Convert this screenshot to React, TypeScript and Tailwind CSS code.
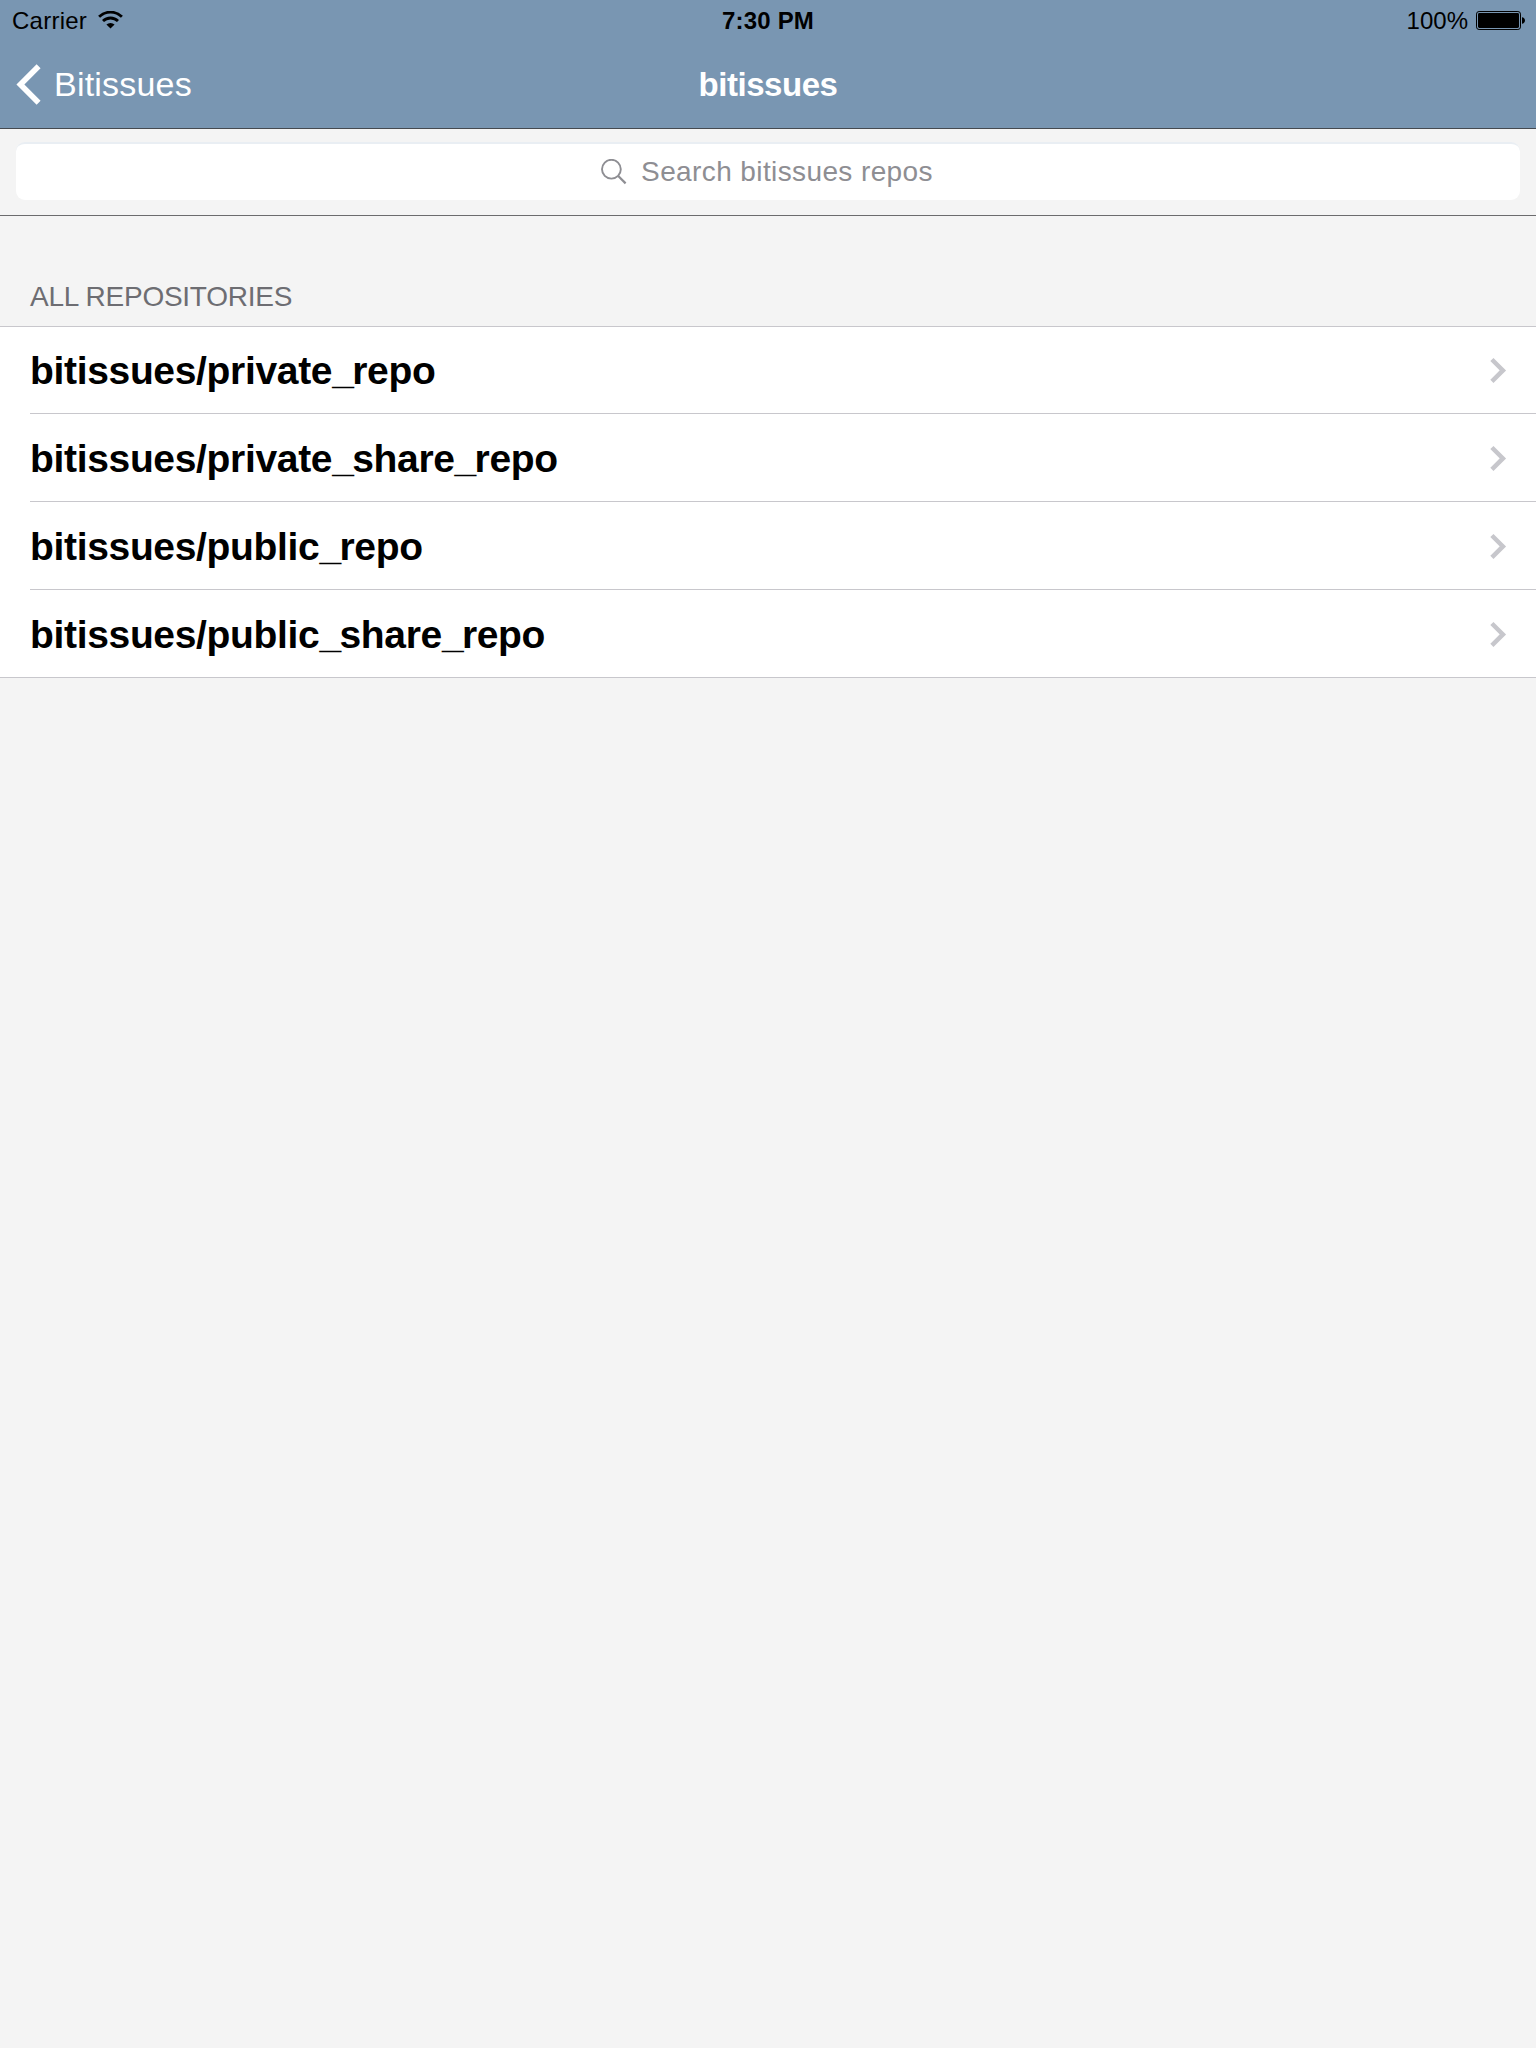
import React from "react";

const repos = [
  "bitissues/private_repo",
  "bitissues/private_share_repo",
  "bitissues/public_repo",
  "bitissues/public_share_repo",
];

function WifiIcon() {
  return (
    <svg className="ml-[11px] h-[18px] w-[25px]" viewBox="0 0 25 18" fill="none" stroke="#000">
      <path d="M1.1 5.8a16.2 16.2 0 0 1 22.8 0" strokeWidth="2.8" />
      <path d="M5 10.1a10.6 10.6 0 0 1 15 0" strokeWidth="2.8" />
      <path d="M12.5 17.6 8.4 13.5a6.1 6.1 0 0 1 8.2 0z" fill="#000" stroke="none" />
    </svg>
  );
}

function BatteryIcon() {
  return (
    <svg className="ml-[8px] h-[20px] w-[50px]" viewBox="0 0 50 20">
      <rect x="0.5" y="1.5" width="44" height="18" rx="2.6" fill="none" stroke="#000" strokeWidth="1" />
      <rect x="2" y="3" width="41" height="15" rx="1.4" fill="#000" />
      <path d="M46 7.2c1.6 0 3 1.5 3 3.3s-1.4 3.3-3 3.3z" fill="#000" />
    </svg>
  );
}

function StatusBar() {
  return (
    <div className="grid h-10 grid-cols-3 items-center text-2xl leading-[38px] text-black">
      <div className="flex items-center pl-3">
        <span className="pt-[2px] tracking-[0.25px]">Carrier</span>
        <WifiIcon />
      </div>
      <div className="pt-[2px] text-center font-bold tracking-[0.2px]">7:30 PM</div>
      <div className="flex items-center justify-end pr-[10px]">
        <span className="pt-[2px]">100%</span>
        <BatteryIcon />
      </div>
    </div>
  );
}

function NavBar() {
  return (
    <div className="grid h-[88px] grid-cols-3 items-center text-[34px] leading-[86px] text-white">
      <div className="flex items-center pl-4">
        <svg className="h-[42px] w-[26px]" viewBox="0 0 26 42" fill="none" stroke="#fff" strokeWidth="5.6">
          <path d="M22.6 3.3 4.4 21.5l18.2 18.2" />
        </svg>
        <span className="ml-[12px] tracking-[0.2px]">Bitissues</span>
      </div>
      <h1 className="pt-[2px] text-center text-[33px] font-bold tracking-[-0.45px]">bitissues</h1>
    </div>
  );
}

function SearchBar() {
  return (
    <div className="h-[87px] border-b border-[#6b6b6d] px-4 pt-[13px]">
      <div className="flex h-[58px] items-center justify-center rounded-[9px] border-t-2 border-[#e9eef3] bg-white pr-[2px] text-[28px] leading-[56px] text-[#8e8e93]">
        <svg className="h-[26px] w-[26px]" viewBox="0 0 26 26" fill="none" stroke="#8e8e93" strokeWidth="1.9">
          <circle cx="10.4" cy="10.2" r="9.4" />
          <path d="m17 16.8 7.6 7.6" strokeWidth="2.2" />
        </svg>
        <span className="ml-[14px] tracking-[0.39px]">Search bitissues repos</span>
      </div>
    </div>
  );
}

function RepoName({ name }: { name: string }) {
  return (
    <span className="pt-[2px] text-[39px] font-bold leading-[84px] tracking-[-0.33px] text-black">
      {name.split("_").map((part, i) => (
        <React.Fragment key={part}>
          {i > 0 && <span className="tracking-[-1.7px]">_</span>}
          {part}
        </React.Fragment>
      ))}
    </span>
  );
}

function RepoRow({ name, last }: { name: string; last: boolean }) {
  return (
    <li className={last ? "h-[88px] border-b border-[#c8c7cc] bg-white pl-[30px]" : "h-[88px] bg-white pl-[30px] first:h-[87px]"}>
      <div className={last ? "flex h-full items-center justify-between pr-[29px]" : "flex h-full items-center justify-between border-b border-[#c8c7cc] pr-[29px]"}>
        <RepoName name={name} />
        <svg className="h-[26px] w-[17px]" viewBox="0 0 17 26" fill="none" stroke="#c7c7cc" strokeWidth="4.5">
          <path d="M1.9 2.5 12.9 13.4 1.9 24.3" />
        </svg>
      </div>
    </li>
  );
}

export default function App() {
  return (
    <div className="flex h-[2048px] w-[1536px] flex-col bg-[#f4f4f4] font-['Liberation_Sans',Arial,sans-serif]">
      <header className="border-b border-[#454a50] bg-[#7996b2]">
        <StatusBar />
        <NavBar />
      </header>
      <SearchBar />
      <main>
        <h2 className="h-[111px] border-b border-[#c8c7cc] pl-[30px] pt-[61px] text-[28px] leading-[40px] tracking-[-0.25px] text-[#6d6d72]">
          ALL REPOSITORIES
        </h2>
        <ul>
          {repos.map((name, i) => (
            <RepoRow key={name} name={name} last={i === repos.length - 1} />
          ))}
        </ul>
      </main>
    </div>
  );
}
